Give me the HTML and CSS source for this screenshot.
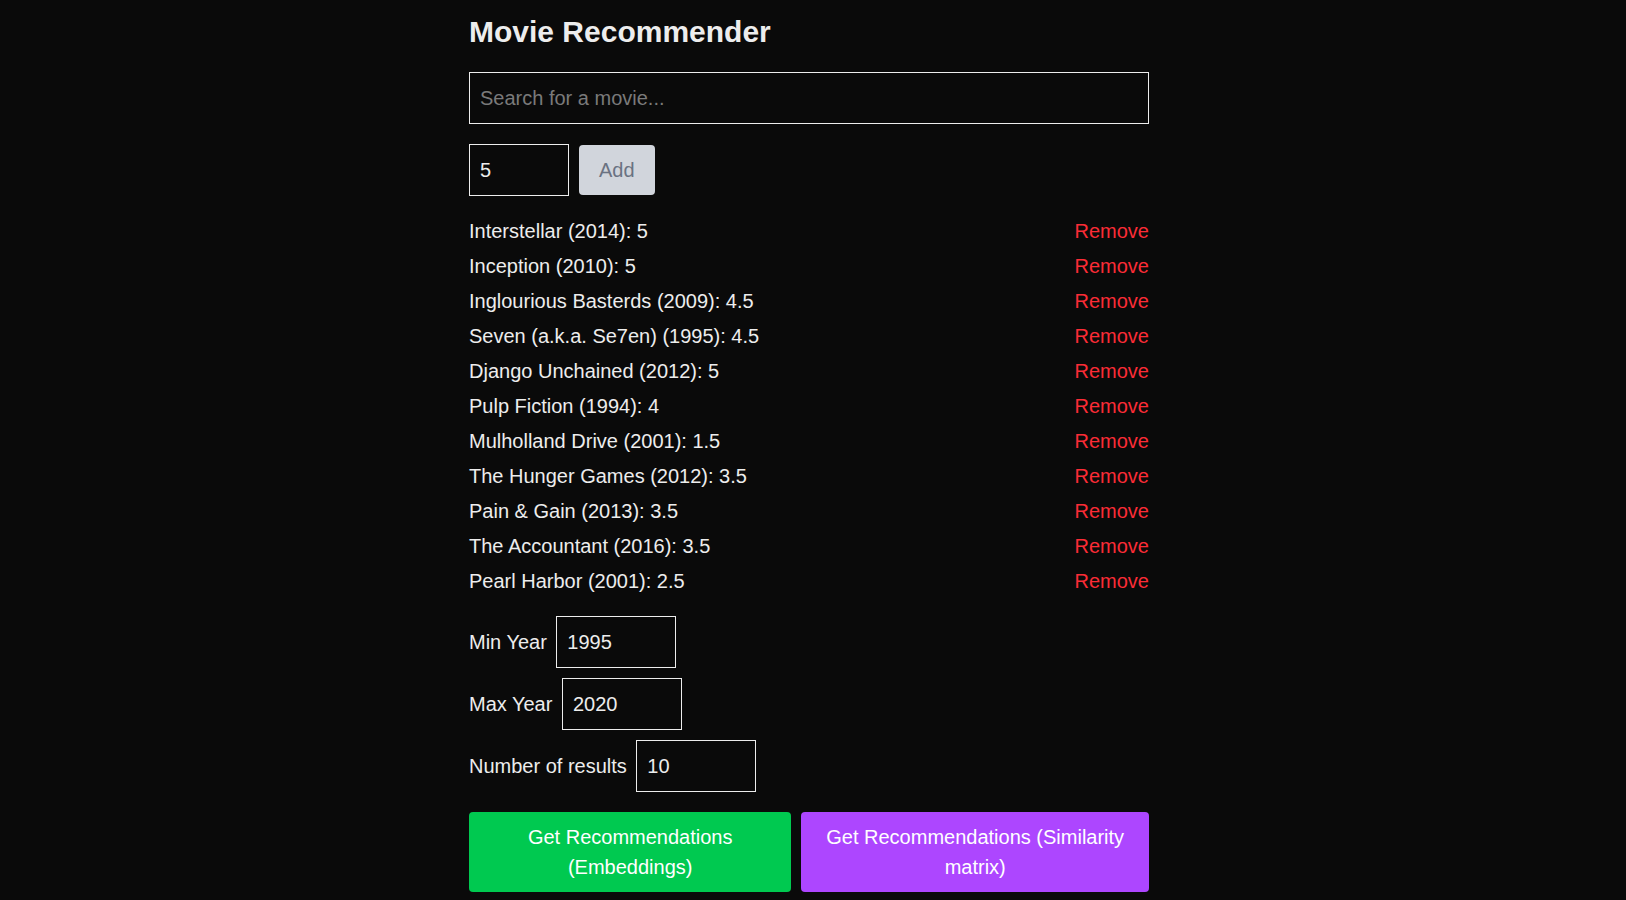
FILE: index.html
```html
<!DOCTYPE html>
<html lang="en">
<head>
<meta charset="utf-8">
<title>Movie Recommender</title>
<link rel="stylesheet" href="styles.css">
</head>
<body>
<main class="app">
  <h1 class="title">Movie Recommender</h1>
  <input class="field search" type="text" placeholder="Search for a movie...">
  <div class="add-row">
    <input class="field rating" type="text" value="5">
    <button class="add-btn">Add</button>
  </div>
  <ul class="list">
    <li class="row"><span>Interstellar (2014): 5</span><button class="remove">Remove</button></li>
    <li class="row"><span>Inception (2010): 5</span><button class="remove">Remove</button></li>
    <li class="row"><span>Inglourious Basterds (2009): 4.5</span><button class="remove">Remove</button></li>
    <li class="row"><span>Seven (a.k.a. Se7en) (1995): 4.5</span><button class="remove">Remove</button></li>
    <li class="row"><span>Django Unchained (2012): 5</span><button class="remove">Remove</button></li>
    <li class="row"><span>Pulp Fiction (1994): 4</span><button class="remove">Remove</button></li>
    <li class="row"><span>Mulholland Drive (2001): 1.5</span><button class="remove">Remove</button></li>
    <li class="row"><span>The Hunger Games (2012): 3.5</span><button class="remove">Remove</button></li>
    <li class="row"><span>Pain &amp; Gain (2013): 3.5</span><button class="remove">Remove</button></li>
    <li class="row"><span>The Accountant (2016): 3.5</span><button class="remove">Remove</button></li>
    <li class="row"><span>Pearl Harbor (2001): 2.5</span><button class="remove">Remove</button></li>
  </ul>
  <div class="filters">
    <label class="filter">Min Year <input class="field small" type="text" value="1995"></label>
    <label class="filter">Max Year <input class="field small" type="text" value="2020"></label>
    <label class="filter">Number of results <input class="field small" type="text" value="10"></label>
  </div>
  <div class="actions">
    <button class="btn green">Get Recommendations (Embeddings)</button>
    <button class="btn purple">Get Recommendations (Similarity matrix)</button>
  </div>
</main>
</body>
</html>
```
FILE: styles.css
```css
html, body {
  margin: 0;
  padding: 0;
}
body {
  background: #0a0a0a;
  color: #ededed;
  font-family: "Liberation Sans", Arial, Helvetica, sans-serif;
  font-size: 20px;
  line-height: 1.5;
}
.app {
  width: 680px;
  margin-left: calc(50% - 344px);
  padding-top: 9px;
}
.title {
  font-size: 30px;
  font-weight: bold;
  line-height: 45px;
  margin: 0 0 18px;
}
.field {
  box-sizing: border-box;
  height: 52px;
  padding: 10px;
  border: 1px solid #ededed;
  background: transparent;
  color: #ededed;
  font: inherit;
  line-height: 30px;
  outline: none;
  border-radius: 0;
}
.field::placeholder {
  color: #7a7a7a;
}
.search {
  display: block;
  width: 100%;
  margin: 0 0 20px;
}
.add-row {
  display: flex;
  align-items: center;
  gap: 10px;
  margin-bottom: 20px;
}
.rating {
  width: 100px;
}
.add-btn {
  border: 0;
  border-radius: 4px;
  padding: 10px 20px;
  background: #d1d5dc;
  color: #6a7282;
  font: inherit;
  line-height: 30px;
}
.list {
  list-style: none;
  margin: 0 0 20px;
  padding: 0;
  display: flex;
  flex-direction: column;
  gap: 5px;
}
.row {
  display: flex;
  justify-content: space-between;
  align-items: center;
  line-height: 30px;
}
.remove {
  border: 0;
  background: none;
  padding: 0;
  color: #fb2c36;
  font: inherit;
  line-height: 30px;
}
.filters {
  display: flex;
  flex-direction: column;
  gap: 10px;
  margin-bottom: 20px;
}
.filter {
  display: flex;
  align-items: center;
  gap: 9.5px;
}
.small {
  width: 120px;
}
.actions {
  display: flex;
  gap: 10px;
}
.btn {
  border: 0;
  border-radius: 4px;
  padding: 10px 20px;
  color: #ffffff;
  font: inherit;
  line-height: 30px;
  text-align: center;
}
.green {
  background: #00c950;
}
.purple {
  background: #ad46ff;
}
```
